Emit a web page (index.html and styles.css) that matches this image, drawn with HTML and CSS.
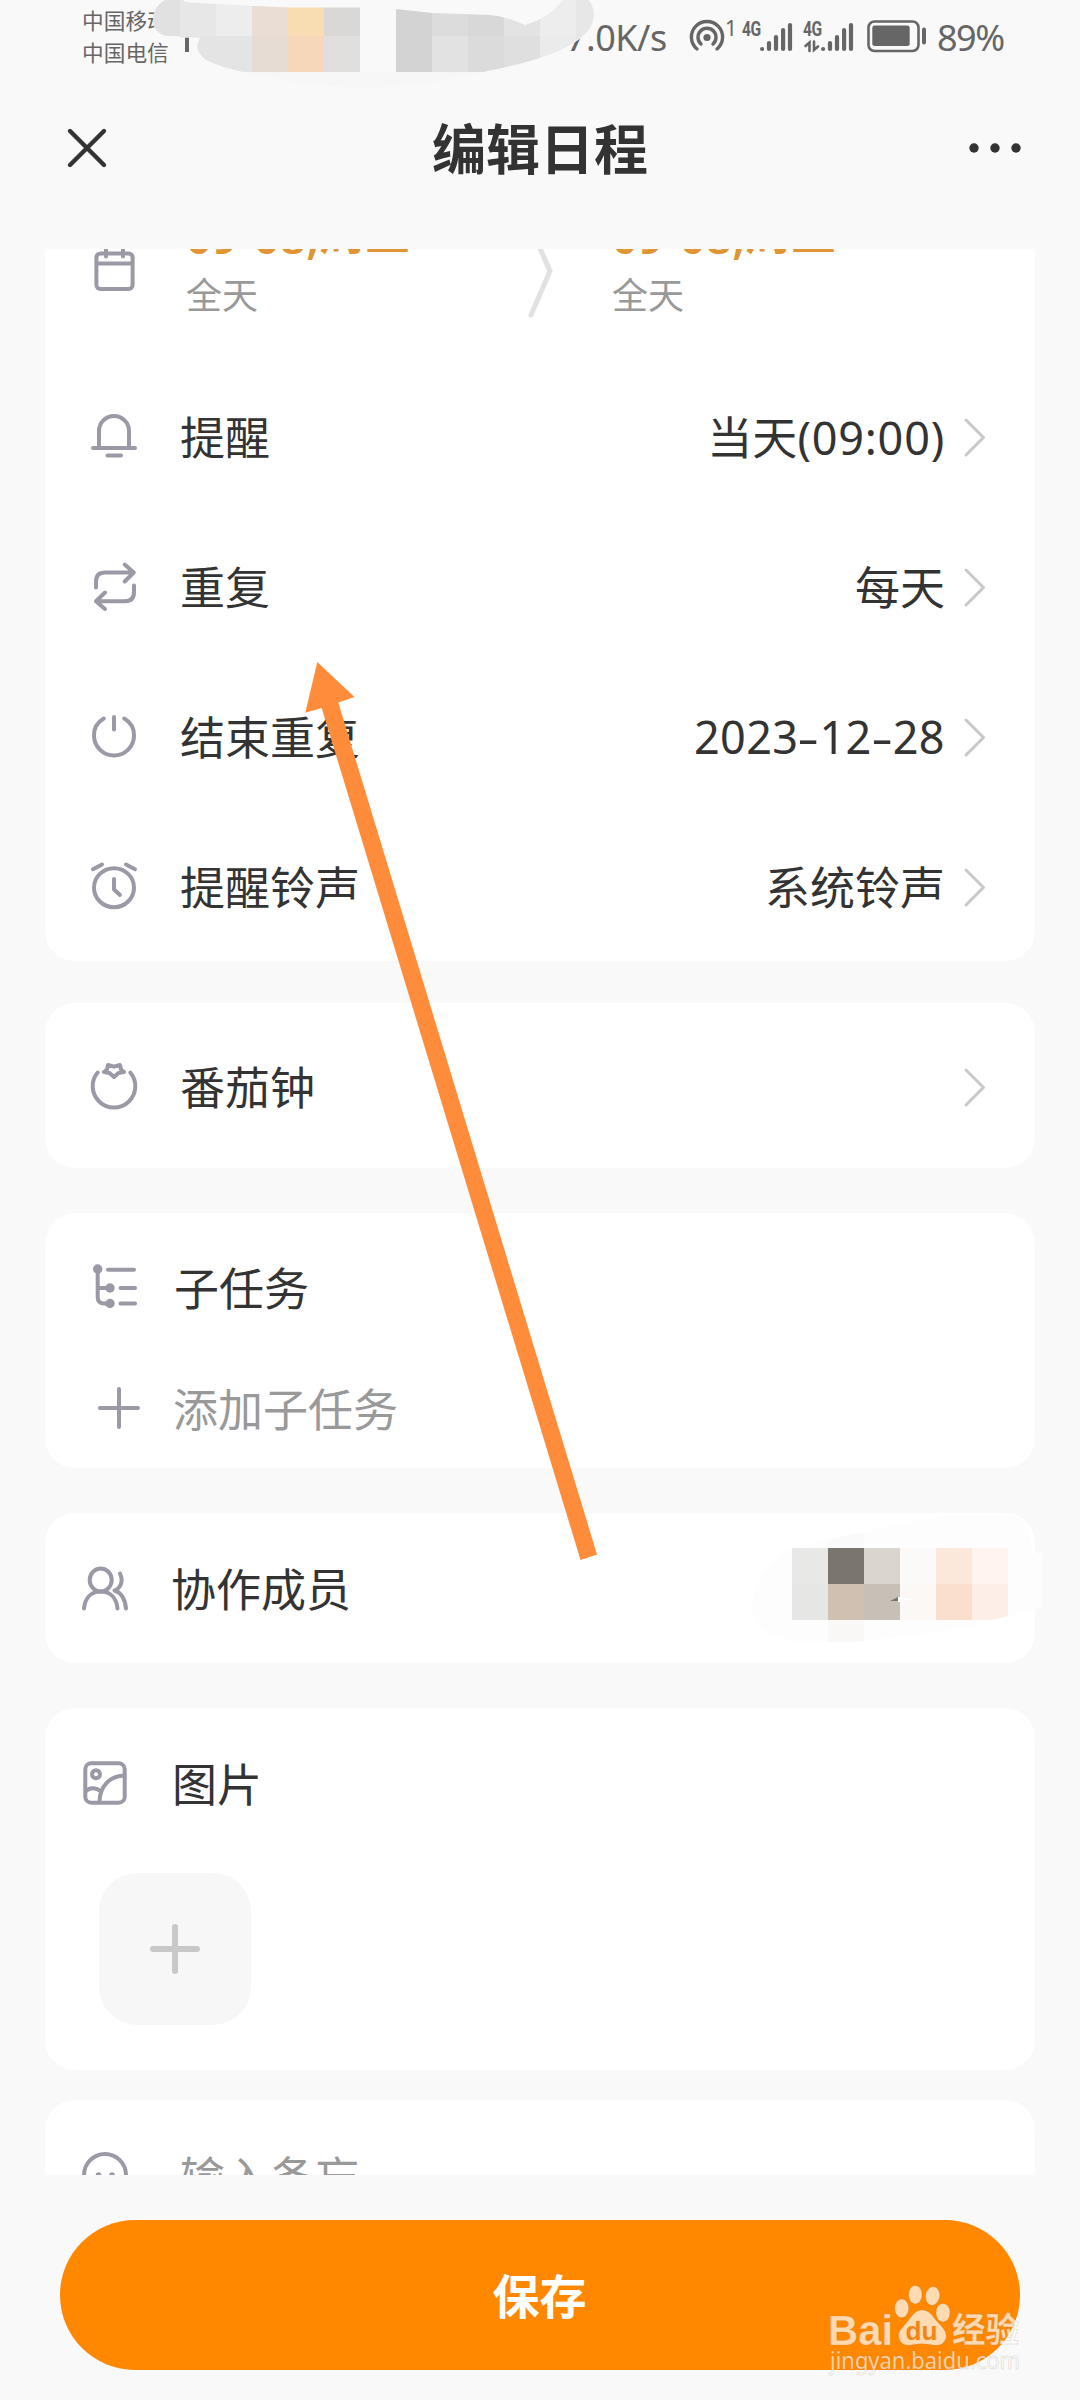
FILE: index.html
```html
<!DOCTYPE html>
<html lang="zh-CN">
<head>
<meta charset="utf-8">
<title>编辑日程</title>
<link rel="stylesheet" href="styles.css">
</head>
<body>
<div class="status">
  <div class="carriers"><span>中国移动</span><span>中国电信</span></div>
  <span class="tick"></span>
  <span class="speed">7.0K/s</span>
  <svg class="hotspot" width="36" height="36" viewBox="0 0 36 36" fill="none" stroke="#666" stroke-width="3.4" stroke-linecap="round">
    <path d="M8 30A15.6 15.6 0 1 1 28 30"/><path d="M12 25A9 9 0 1 1 24 25"/><circle cx="18" cy="18.5" r="3.6" fill="#666" stroke="none"/>
  </svg>
  <span class="hotcount">1</span>
  <div class="signal">
    <span class="net">4G</span>
    <svg width="32" height="32" viewBox="0 0 32 32" stroke="#666" stroke-width="4.2" stroke-linecap="round"><path d="M2.1 28v0M9 22v6M16 16v12M23.1 9v19M30 4v24"/></svg>
  </div>
  <div class="signal">
    <span class="net">4G</span>
    <svg width="32" height="32" viewBox="0 0 32 32" stroke="#666" stroke-width="4.2" stroke-linecap="round"><path d="M2.1 28v0M9 22v6M16 16v12M23.1 9v19M30 4v24"/><path d="M-15.500 25l4-3.500v8.500M-7 20.500v8.500l4-3.500" fill="none" stroke-width="2.6"/></svg>
  </div>
  <svg class="battery" width="60" height="32" viewBox="0 0 60 32"><rect x="1.5" y="1.5" width="50" height="29.500" rx="6" fill="none" stroke="#666" stroke-width="2.6"/><rect x="5.3" y="5.6" width="37.4" height="20.4" rx="2.5" fill="#666"/><rect x="55" y="7.5" width="4" height="17" rx="2" fill="#666"/></svg>
  <span class="percent">89%</span>
</div>

<header class="header">
  <svg class="close" width="44" height="44" viewBox="0 0 44 44" stroke="#333" stroke-width="4.4" stroke-linecap="round"><path d="M5 5L39 39M39 5L5 39"/></svg>
  <h1>编辑日程</h1>
  <svg class="more" width="54" height="20" viewBox="0 0 54 20" fill="#333"><circle cx="6" cy="10" r="4.7"/><circle cx="27" cy="10" r="4.7"/><circle cx="48" cy="10" r="4.7"/></svg>
</header>

<main class="scroll">
  <section class="card first">
    <div class="dates">
      <svg class="icon" width="48" height="48" viewBox="0 0 48 48"><rect x="6.4" y="9.4" width="36.2" height="35.6" rx="4"/><path d="M7 19.5h35M16 3v9.500M33 3v9.500"/></svg>
      <div class="date"><b><span class="num">09-08,</span>周五</b><span>全天</span></div>
      <svg class="sep" width="30" height="96" viewBox="0 0 30 96"><path d="M6 5L25 48L6 92"/></svg>
      <div class="date"><b><span class="num">09-08,</span>周五</b><span>全天</span></div>
    </div>
    <div class="row">
      <svg class="icon" width="48" height="48" viewBox="0 0 48 48"><path d="M9 37V20a15 15 0 0 1 30 0v17M3 37h42M17.500 44.500h13.500"/></svg>
      <span class="label">提醒</span><span class="value">当天<span class="num time">(09:00)</span></span>
      <svg class="chev" width="24" height="44" viewBox="0 0 24 44"><path d="M3 5L20.500 22.500L3 40"/></svg>
    </div>
    <div class="row">
      <svg class="icon" width="48" height="48" viewBox="0 0 48 48"><path d="M6 26.500V20.500q0-9 9-9H43.500M34.700 3.500L43.800 11.500L34.700 20.500M44 24.500V31q0 9.300-9 9.300H6M15 31.500L6 40.300L15 48"/></svg>
      <span class="label">重复</span><span class="value">每天</span>
      <svg class="chev" width="24" height="44" viewBox="0 0 24 44"><path d="M3 5L20.500 22.500L3 40"/></svg>
    </div>
    <div class="row">
      <svg class="icon" width="48" height="48" viewBox="0 0 48 48"><path d="M13.800 7.600C7 11.500 4 18 4 24.500a20 20 0 0 0 40 0C44 18 41 11.500 34.200 7.600M24 6v12.500"/></svg>
      <span class="label">结束重复</span><span class="value num date-value">2023<i>-</i>12<i>-</i>28</span>
      <svg class="chev" width="24" height="44" viewBox="0 0 24 44"><path d="M3 5L20.500 22.500L3 40"/></svg>
    </div>
    <div class="row">
      <svg class="icon" width="48" height="48" viewBox="0 0 48 48"><ellipse cx="24" cy="26.700" rx="20" ry="19.500"/><path d="M24 18v10.500L30 34M3 8.300L12 3.500M45 8.300L36 3.500"/></svg>
      <span class="label">提醒铃声</span><span class="value">系统铃声</span>
      <svg class="chev" width="24" height="44" viewBox="0 0 24 44"><path d="M3 5L20.500 22.500L3 40"/></svg>
    </div>
  </section>

  <section class="card pomodoro">
    <div class="row">
      <svg class="icon" width="48" height="48" viewBox="0 0 48 48"><path d="M7.700 10.500A21.300 21.300 0 1 0 40.300 10.500M18 3L24 4.700L30 3L31 7.500L34 10L28.500 11L24 15L19.500 11L14 10L17 7.500Z"/></svg>
      <span class="label">番茄钟</span><span class="value"></span>
      <svg class="chev" width="24" height="44" viewBox="0 0 24 44"><path d="M3 5L20.500 22.500L3 40"/></svg>
    </div>
  </section>

  <section class="card subtasks">
    <div class="row">
      <svg class="icon" width="48" height="48" viewBox="0 0 48 48"><path d="M7.700 9v28q0 6.500 6.500 6.500H20M7.700 28H20M18 9.800h26M30.500 28H45M30.500 43.500H45"/><g fill="#9a99a6" stroke="none"><circle cx="7.700" cy="9" r="4.700"/><circle cx="20" cy="28" r="4.700"/><circle cx="20" cy="43.500" r="4.700"/></g></svg>
      <span class="label">子任务</span>
    </div>
    <div class="row add">
      <svg class="icon" width="48" height="48" viewBox="0 0 48 48"><path d="M24 5v38M5 24h38"/></svg>
      <span class="label">添加子任务</span>
    </div>
  </section>

  <section class="card members">
    <div class="row">
      <svg class="icon" width="48" height="48" viewBox="0 0 48 48"><ellipse cx="20.700" cy="16" rx="11" ry="11.500"/><path d="M4 44.500C5 34 11 27.500 20.700 27.500S36.500 34 37.500 44.500M40 9.500C43.500 17 41 24 34.500 26.500C41 28.500 45 35 46 44.500"/></svg>
      <span class="label">协作成员</span>
    </div>
  </section>

  <section class="card pictures">
    <div class="row">
      <svg class="icon" width="48" height="48" viewBox="0 0 48 48"><rect x="4.300" y="4.300" width="39.400" height="39.400" rx="6"/><circle cx="15" cy="15.300" r="4"/><path d="M43.500 16.500C28 17 18.500 28 18.500 43M5 32C9 28 15 28.500 19.500 32"/></svg>
      <span class="label">图片</span>
    </div>
    <div class="tile"><svg width="60" height="60" viewBox="0 0 60 60" stroke="#c8c8c8" stroke-width="6" stroke-linecap="round"><path d="M30 8v44M8 30h44"/></svg></div>
  </section>

  <section class="card memo">
    <div class="row">
      <svg class="icon" width="48" height="48" viewBox="0 0 48 48"><circle cx="24" cy="24" r="21"/><circle cx="17.500" cy="24" r="2.800" fill="#9a99a6" stroke="none"/><circle cx="31" cy="24" r="2.800" fill="#9a99a6" stroke="none"/><path d="M16 32q8 7 16 0"/></svg>
      <span class="label">输入备忘</span>
    </div>
  </section>
</main>

<footer class="footer"><button class="save" type="button">保存</button></footer>

<svg class="overlay" width="1080" height="2400" viewBox="0 0 1080 2400">
  <defs>
    <clipPath id="smear"><path d="M153 20C153 8 162 0 170 -2H181C184 1 184 2 190 2.500L252 6L290 7.500H360L396 9L432 13L490 15Q508 17 525 25Q552 17 564 -2H587Q594 6 594 15Q593 25 588 31C578 42 562 51 540 58Q515 66 485 71.500Q430 86 365 88Q300 86 243 72Q220 67 206 60Q196 53 197.500 44L200 37.500H175Q153 36 153 20Z"/></clipPath>
    <clipPath id="smear2"><path d="M752 1605Q755 1570 792 1548Q822 1541 864 1532Q900 1522 940 1517L1010 1514Q1028 1518 1033 1553H1042V1608L1000 1618L972 1627L900 1637L850 1642H828Q750 1645 752 1605Z"/></clipPath>
  </defs>
  <g clip-path="url(#smear)" shape-rendering="crispEdges">
    <rect x="140" y="0" width="460" height="90" fill="#f7f7f7"/>
    <rect x="140" y="0" width="40" height="36" fill="#e1e1e1"/><rect x="180" y="0" width="36" height="36" fill="#e7e7e7"/><rect x="216" y="0" width="36" height="36" fill="#ededed"/><rect x="252" y="0" width="36" height="36" fill="#e9ddd4"/><rect x="288" y="0" width="36" height="36" fill="#f8dcb2"/><rect x="324" y="0" width="36" height="36" fill="#d9d8d6"/><rect x="360" y="0" width="36" height="72" fill="#f9f9f9"/><rect x="396" y="0" width="36" height="72" fill="#d3d3d3"/><rect x="432" y="0" width="36" height="36" fill="#dcdcdc"/><rect x="468" y="0" width="36" height="36" fill="#d8d8d8"/><rect x="504" y="0" width="36" height="36" fill="#e3e3e3"/><rect x="540" y="0" width="36" height="36" fill="#ededed"/><rect x="576" y="0" width="24" height="72" fill="#e7e7e7"/>
    <rect x="180" y="36" width="72" height="36" fill="#e4e4e4"/><rect x="252" y="36" width="36" height="36" fill="#e7dcd3"/><rect x="288" y="36" width="36" height="36" fill="#f7d7ba"/><rect x="324" y="36" width="36" height="36" fill="#e0dfde"/><rect x="432" y="36" width="36" height="36" fill="#e2e2e2"/><rect x="468" y="36" width="36" height="36" fill="#dbdbdb"/><rect x="504" y="36" width="36" height="36" fill="#dfdfdf"/><rect x="540" y="36" width="36" height="36" fill="#ebebeb"/>
  </g>
  <g clip-path="url(#smear2)">
    <rect x="750" y="1510" width="300" height="140" fill="#fdfdfd"/>
    <rect x="828" y="1510" width="36" height="38" fill="#fafafa"/><rect x="828" y="1620" width="36" height="30" fill="#f9f8f6"/>
    <rect x="792" y="1548" width="36" height="36" fill="#e8e8e7"/><rect x="828" y="1548" width="36" height="36" fill="#7b756f"/><rect x="864" y="1548" width="36" height="36" fill="#dad5cf"/><rect x="900" y="1548" width="36" height="36" fill="#fcfaf8"/><rect x="936" y="1548" width="36" height="36" fill="#fbe8db"/><rect x="972" y="1548" width="36" height="36" fill="#fff4ee"/>
    <rect x="792" y="1584" width="36" height="36" fill="#e6e6e5"/><rect x="828" y="1584" width="36" height="36" fill="#cfc0b2"/><rect x="864" y="1584" width="36" height="36" fill="#c7c0b7"/><rect x="900" y="1584" width="36" height="36" fill="#fcf8f6"/><rect x="936" y="1584" width="36" height="36" fill="#fadfcf"/><rect x="972" y="1584" width="36" height="36" fill="#fdefe7"/>
    <path d="M890 1601L898 1597V1601Z" fill="#7b756f"/><path d="M898 1597L914 1599L898 1602Z" fill="#fff"/>
  </g>
  <path d="M317.300 662L354.500 697L338.300 702.500L597 1554.500L580.500 1560L321.700 708L305.300 712.800Z" fill="#ff8c3a"/>
  <g class="mark">
    <text class="bai" x="828" y="2344.500" textLength="65" lengthAdjust="spacingAndGlyphs">Bai</text>
    <ellipse cx="901.700" cy="2308.300" rx="7" ry="9.300"/><ellipse cx="915.300" cy="2294.700" rx="6.700" ry="9.300"/><ellipse cx="932.600" cy="2296" rx="7" ry="9.300" transform="rotate(8 932.600 2296)"/><ellipse cx="943" cy="2312.700" rx="7" ry="9.300"/>
    <path d="M922 2310Q929 2310 934 2318L943 2328Q949 2336 944 2342Q940 2347 930 2344.500Q922 2343 914 2344.500Q904 2347 900 2341Q896 2333 903 2327L911 2317Q916 2310 922 2310Z"/>
    <text class="du" x="905.500" y="2340" textLength="32" lengthAdjust="spacingAndGlyphs">du</text>
    <text class="exp" x="952" y="2342" textLength="67" lengthAdjust="spacingAndGlyphs">经验</text>
    <text class="url" x="830" y="2369" textLength="190" lengthAdjust="spacingAndGlyphs">jingyan.baidu.com</text>
  </g>
</svg>
</body>
</html>
```
FILE: styles.css
```css
* { box-sizing: border-box; }
body {
  margin: 0;
  width: 1080px;
  height: 2400px;
  position: relative;
  overflow: hidden;
  display: flex;
  flex-direction: column;
  background: #f9f9f9;
  color: #333;
  font-family: "Noto Sans CJK SC", sans-serif;
}
svg { display: block; flex: none; overflow: visible; }
.num { font-family: "Noto Sans", "Noto Sans CJK SC", sans-serif; line-height: 1; }

/* status bar */
.status {
  height: 75px;
  flex: none;
  display: flex;
  align-items: flex-start;
  padding-left: 82px;
  color: #666;
  font-family: "Noto Sans", "Noto Sans CJK SC", sans-serif;
}
.carriers { display: flex; flex-direction: column; width: 103px; padding-top: 4px; font: 21.7px/32px "Noto Sans CJK SC", sans-serif; }
.tick { width: 4px; height: 15px; margin-top: 37px; background: #666; }
.speed { width: 122px; margin: 13px 0 0 377px; font-size: 36px; line-height: 50px; letter-spacing: -0.5px; }
.hotspot { margin: 19px 0 0 1px; }
.hotcount { width: 17px; margin: 15px 0 0 0; font-size: 21px; line-height: 26px; }
.signal { display: flex; width: 61px; padding-top: 19px; }
.net { width: 18px; font: 700 20px/20px Roboto, sans-serif; letter-spacing: -0.5px; transform: scaleX(0.78); transform-origin: 0 0; }
.signal svg { margin-top: 2px; }
.battery { margin: 20px 0 0 3px; }
.percent { margin: 13px 0 0 10px; font-size: 36px; line-height: 50px; letter-spacing: -1.500px; }

/* title bar */
.header { height: 174px; flex: none; display: flex; align-items: flex-start; justify-content: space-between; padding: 32px 58px 0 65px; }
.close { margin-top: 19px; }
.header h1 { margin: 0 0 0 3px; font-size: 54px; line-height: 80px; font-weight: 700; }
.more { margin-top: 31px; }

/* scrolled list */
.scroll { height: 1926px; flex: none; overflow: hidden; padding: 0 45px; }
.card { background: #fff; border-radius: 30px; padding: 0 45px; }
.card.first { height: 712px; border-radius: 0 0 30px 30px; margin-bottom: 42px; }
.icon { fill: none; stroke: #9a99a6; stroke-width: 4; stroke-linecap: round; stroke-linejoin: round; }
.row { display: flex; align-items: center; height: 150px; font-size: 45px; line-height: 66px; }
.label { margin-left: 42px; white-space: nowrap; }
.value { margin-left: auto; white-space: nowrap; }
.first .label, .first .value { padding-top: 2px; }
.time { letter-spacing: 0.8px; }
.date-value { letter-spacing: 0.4px; }
.date-value i { display: inline-block; width: 21px; text-align: center; font-style: normal; transform: scaleX(1.5); }
.chev { margin: 3px 3px 0 18px; fill: none; stroke: #c8c8c8; stroke-width: 3; stroke-linecap: round; stroke-linejoin: round; }
.dates { height: 111px; display: flex; align-items: flex-start; }
.dates .icon { margin-top: -5px; }
.date { width: 339px; flex: none; margin: -51px 0 0 48px; display: flex; flex-direction: column; white-space: nowrap; }
.date b { height: 69px; color: #e09433; font-size: 45px; line-height: 66px; font-weight: 600; letter-spacing: 0.6px; }
.date b .num { vertical-align: -4px; }
.date > span { color: #999; font-size: 36px; line-height: 52px; }
.sep { margin: -26px 0 0 0; fill: none; stroke: #e1e1e1; stroke-width: 5; stroke-linecap: round; stroke-linejoin: round; }
.sep + .date { margin-left: 57px; }

.pomodoro { height: 165px; padding-top: 8px; margin-bottom: 45px; }
.pomodoro .icon { margin-top: -1px; }
.pomodoro .chev { margin-top: 1px; }
.subtasks { height: 255px; margin-bottom: 45px; }
.subtasks .row { height: 146px; }
.subtasks .label { margin-left: 36px; padding-top: 2px; }
.subtasks .icon { margin-top: -5px; }
.subtasks .row.add { height: 96px; color: #999; padding-left: 5px; }
.subtasks .add .label { margin-left: 30px; }
.subtasks .add .icon { margin-top: 2px; }
.members { height: 150px; margin-bottom: 45px; padding-left: 35px; }
.members .label { margin-left: 43px; }
.pictures { height: 362px; margin-bottom: 30px; padding-left: 36px; }
.pictures .label { margin-left: 43px; }
.tile { width: 152px; height: 152px; margin: 15px 0 0 18px; border-radius: 38px; background: #f7f7f7; display: flex; align-items: center; justify-content: center; }
.memo { height: 200px; padding-left: 36px; color: #999; }
.memo .label { margin-left: 51px; padding-top: 1px; }

/* bottom action */
.footer { padding: 45px 60px 0; }
.save { display: block; width: 960px; height: 150px; border: 0; border-radius: 75px; background: #ff8800; color: #fff; padding: 0 1px 2px 0; font: 700 47px/68px "Noto Sans CJK SC", sans-serif; }

/* annotations lying over the screen */
.overlay { position: absolute; left: 0; top: 0; }
.mark { fill: rgba(255, 255, 255, 0.7); stroke: rgba(150, 120, 90, 0.2); stroke-width: 1; }
.mark .bai { font: 700 42px "Liberation Sans", sans-serif; }
.mark .du { font: 700 26px "Liberation Sans", sans-serif; fill: #f08617; stroke: none; }
.mark .exp { font: 700 34px "Noto Sans CJK SC", sans-serif; }
.mark .url { font: 400 23px "Noto Sans", sans-serif; }
```
